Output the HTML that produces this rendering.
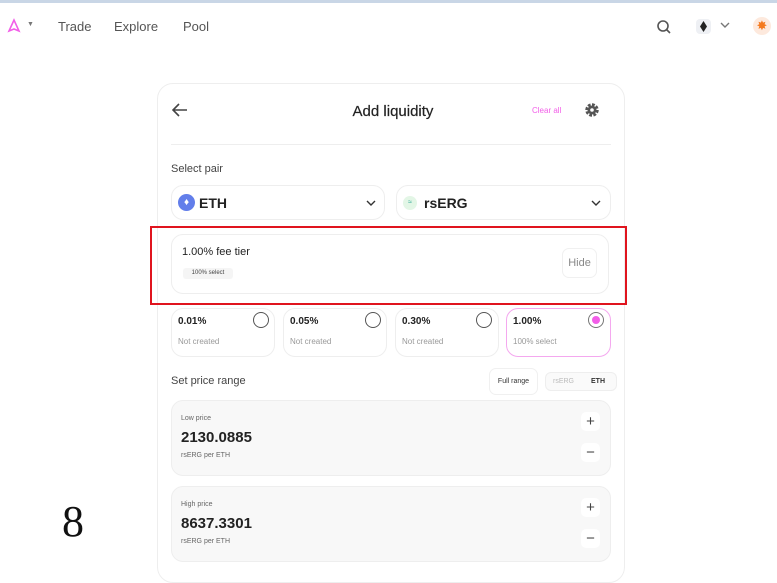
<!DOCTYPE html>
<html><head><meta charset="utf-8"><style>
*{box-sizing:border-box;margin:0;padding:0}
body{width:777px;height:572px;overflow:hidden;background:#fff;font-family:"Liberation Sans",sans-serif;color:#222;position:relative}
.a{position:absolute}
.box{position:absolute;border:1px solid #eee;border-radius:12px;background:#fff}
.g{color:#999}
.rad{position:absolute;width:16px;height:16px;border:1.5px solid #555;border-radius:50%}
.pm{position:absolute;width:19px;height:19px;background:#fff;border-radius:5px;text-align:center;font-size:15px;line-height:19px;color:#444}
</style></head><body>
<div class="a" style="left:0;top:0;width:777px;height:3px;background:#c9d6e6"></div>
<svg class="a" style="left:6px;top:18px" width="16" height="16" viewBox="0 0 16 16"><path d="M8 2 L3 13 L8 11 L13 13 Z" fill="none" stroke="#f25ee8" stroke-width="1.6"/></svg>
<div class="a" style="left:27px;top:21px;font-size:7px;color:#777">▼</div>
<div class="a" style="left:58px;top:19px;font-size:13px;color:#555">Trade</div>
<div class="a" style="left:114px;top:19px;font-size:13px;color:#555">Explore</div>
<div class="a" style="left:183px;top:19px;font-size:13px;color:#555">Pool</div>
<svg class="a" style="left:656px;top:19px" width="16" height="16" viewBox="0 0 16 16"><circle cx="7" cy="7" r="5" fill="none" stroke="#555" stroke-width="1.6"/><path d="M10.5 10.5 L14 14" stroke="#555" stroke-width="1.6"/></svg>
<div class="a" style="left:696px;top:19px;width:15px;height:15px;background:#eef0f4;border-radius:4px"></div>
<svg class="a" style="left:700px;top:21px" width="7" height="11" viewBox="0 0 7 11"><path d="M3.5 0 L7 5.5 L3.5 11 L0 5.5Z" fill="#222"/></svg>
<svg class="a" style="left:720px;top:22px" width="10" height="7" viewBox="0 0 10 7"><path d="M1 1 L5 5 L9 1" fill="none" stroke="#777" stroke-width="1.4"/></svg>
<div class="a" style="left:753px;top:17px;width:18px;height:18px;border-radius:50%;background:#fde9dd;color:#f47a1e;font-size:13px;text-align:center;line-height:18px">✸</div>
<div class="a" style="left:157px;top:83px;width:468px;height:500px;border:1px solid #eee;border-radius:16px"></div>
<svg class="a" style="left:172px;top:103px" width="16" height="14" viewBox="0 0 16 14"><path d="M15 7 H2 M7 1 L1 7 L7 13" fill="none" stroke="#444" stroke-width="1.6"/></svg>
<div class="a" style="left:300px;top:103px;width:186px;text-align:center;font-size:15px;color:#222;-webkit-text-stroke:0.2px #222">Add liquidity</div>
<div class="a" style="left:532px;top:106px;font-size:8px;color:#f25ee8">Clear all</div>
<svg class="a" style="left:584px;top:102px" width="16" height="16" viewBox="0 0 16 16"><circle cx="8" cy="8" r="5" fill="none" stroke="#555" stroke-width="3.5" stroke-dasharray="2.6 1.3"/><circle cx="8" cy="8" r="4.5" fill="#555"/><circle cx="8" cy="8" r="1.8" fill="#fff"/></svg>
<div class="a" style="left:171px;top:144px;width:440px;height:1px;background:#eee"></div>
<div class="a" style="left:171px;top:163px;font-size:11px;color:#444">Select pair</div>
<div class="box" style="left:171px;top:185px;width:214px;height:35px"></div>
<div class="a" style="left:178px;top:194px;width:17px;height:17px;border-radius:50%;background:#627eea;color:#fff;font-size:10px;text-align:center;line-height:17px">♦</div>
<div class="a" style="left:199px;top:195px;font-size:14px;font-weight:bold;color:#222">ETH</div>
<svg class="a" style="left:366px;top:200px" width="10" height="7" viewBox="0 0 10 7"><path d="M1 1 L5 5 L9 1" fill="none" stroke="#333" stroke-width="1.4"/></svg>
<div class="box" style="left:396px;top:185px;width:215px;height:35px"></div>
<div class="a" style="left:403px;top:196px;width:14px;height:14px;border-radius:50%;background:#e3f6e6;color:#3a9;font-size:7px;text-align:center;line-height:14px">≈</div>
<div class="a" style="left:424px;top:195px;font-size:14px;font-weight:bold;color:#222">rsERG</div>
<svg class="a" style="left:591px;top:200px" width="10" height="7" viewBox="0 0 10 7"><path d="M1 1 L5 5 L9 1" fill="none" stroke="#333" stroke-width="1.4"/></svg>
<div class="box" style="left:171px;top:234px;width:438px;height:60px"></div>
<div class="a" style="left:182px;top:246px;font-size:11px;color:#222">1.00% fee tier</div>
<div class="a" style="left:183px;top:268px;width:50px;height:11px;background:#f5f5f5;border-radius:3px;font-size:6px;line-height:11px;text-align:center;color:#444">100% select</div>
<div class="a" style="left:562px;top:248px;width:35px;height:30px;border:1px solid #f0f0f0;border-radius:7px;font-size:11px;line-height:29px;text-align:center;color:#888">Hide</div>
<div class="a" style="left:150px;top:226px;width:477px;height:79px;border:2px solid #e0141e"></div>
<div class="box" style="left:171px;top:308px;width:104px;height:49px"></div>
<div class="box" style="left:283px;top:308px;width:104px;height:49px"></div>
<div class="box" style="left:395px;top:308px;width:104px;height:49px"></div>
<div class="box" style="left:506px;top:308px;width:105px;height:49px;border-color:#f4a8ef"></div>
<div class="a" style="left:178px;top:316px;font-size:10px;font-weight:bold">0.01%</div>
<div class="a g" style="left:178px;top:337px;font-size:8px">Not created</div>
<div class="a" style="left:290px;top:316px;font-size:10px;font-weight:bold">0.05%</div>
<div class="a g" style="left:290px;top:337px;font-size:8px">Not created</div>
<div class="a" style="left:402px;top:316px;font-size:10px;font-weight:bold">0.30%</div>
<div class="a g" style="left:402px;top:337px;font-size:8px">Not created</div>
<div class="a" style="left:513px;top:316px;font-size:10px;font-weight:bold">1.00%</div>
<div class="a g" style="left:513px;top:337px;font-size:8px">100% select</div>
<div class="rad" style="left:253px;top:312px"></div>
<div class="rad" style="left:365px;top:312px"></div>
<div class="rad" style="left:476px;top:312px"></div>
<div class="rad" style="left:588px;top:312px;border-color:#777"></div>
<div class="a" style="left:592px;top:316px;width:8px;height:8px;border-radius:50%;background:#f25ee8"></div>
<div class="a" style="left:171px;top:375px;font-size:11px;color:#444">Set price range</div>
<div class="a" style="left:489px;top:368px;width:49px;height:27px;border:1px solid #f0f0f0;border-radius:7px;font-size:7px;line-height:26px;text-align:center;color:#333">Full range</div>
<div class="a" style="left:545px;top:372px;width:72px;height:19px;border:1px solid #eee;border-radius:6px;background:#fafafa"></div>
<div class="a" style="left:553px;top:378px;font-size:7px;color:#bbb">rsERG</div>
<div class="a" style="left:591px;top:378px;font-size:7px;font-weight:bold;color:#333">ETH</div>
<div class="box" style="left:171px;top:400px;width:440px;height:76px;background:#f8f8f8"></div>
<div class="a" style="left:181px;top:415px;font-size:7px;color:#666">Low price</div>
<div class="a" style="left:181px;top:429px;font-size:15px;font-weight:bold;color:#222">2130.0885</div>
<div class="a" style="left:181px;top:452px;font-size:7px;color:#666">rsERG per ETH</div>
<div class="pm" style="left:581px;top:412px">+</div>
<div class="pm" style="left:581px;top:443px">−</div>
<div class="box" style="left:171px;top:486px;width:440px;height:76px;background:#f8f8f8"></div>
<div class="a" style="left:181px;top:501px;font-size:7px;color:#666">High price</div>
<div class="a" style="left:181px;top:515px;font-size:15px;font-weight:bold;color:#222">8637.3301</div>
<div class="a" style="left:181px;top:538px;font-size:7px;color:#666">rsERG per ETH</div>
<div class="pm" style="left:581px;top:498px">+</div>
<div class="pm" style="left:581px;top:529px">−</div>
<div class="a" style="left:62px;top:496px;font-family:'Liberation Serif',serif;font-size:44px;color:#111">8</div>
</body></html>
